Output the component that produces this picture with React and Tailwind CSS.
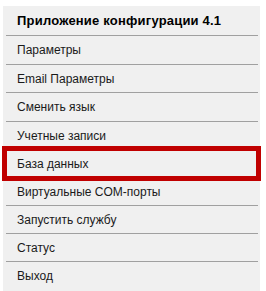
import React from "react";

const items = [
  { label: "Параметры", h: "h-[29px]" },
  { label: "Email Параметры", h: "h-[28px]" },
  { label: "Сменить язык", h: "h-[29px]" },
  { label: "Учетные записи", h: "h-[28px]" },
  { label: "База данных", h: "h-[28px]", active: true },
  { label: "Виртуальные COM-порты", h: "h-[28px]" },
  { label: "Запустить службу", h: "h-[28px]" },
  { label: "Статус", h: "h-[28px]" },
  { label: "Выход", h: "h-[28px]", last: true },
];

const App = () => {
  return (
    <div
      className="w-[266px] h-[291px] bg-white pt-[6px] pl-[3px] overflow-hidden"
      style={{ fontFamily: '"Liberation Sans", Arial, sans-serif' }}
    >
      <div className="w-[257px] h-[285px] bg-[#f0f0f0] pl-[3px] pr-[2px]">
        <div className="h-[30px] border-b border-[#a0a0a0] flex items-center pl-[11px] text-[13px] tracking-[0.2px] font-bold text-black">
          Приложение конфигурации 4.1
        </div>
        {items.map((item) => (
          <div
            key={item.label}
            className={`relative flex items-center pl-[11px] text-[12px] text-[#1a1a1a] ${item.h} ${
              item.last ? "" : "border-b border-[#a0a0a0]"
            }`}
          >
            {item.label}
            {item.active && (
              <div className="absolute left-[-4px] right-[-3px] top-[-4px] bottom-[-4px] border-[5px] border-[#c00000]" />
            )}
          </div>
        ))}
      </div>
    </div>
  );
};

export default App;
